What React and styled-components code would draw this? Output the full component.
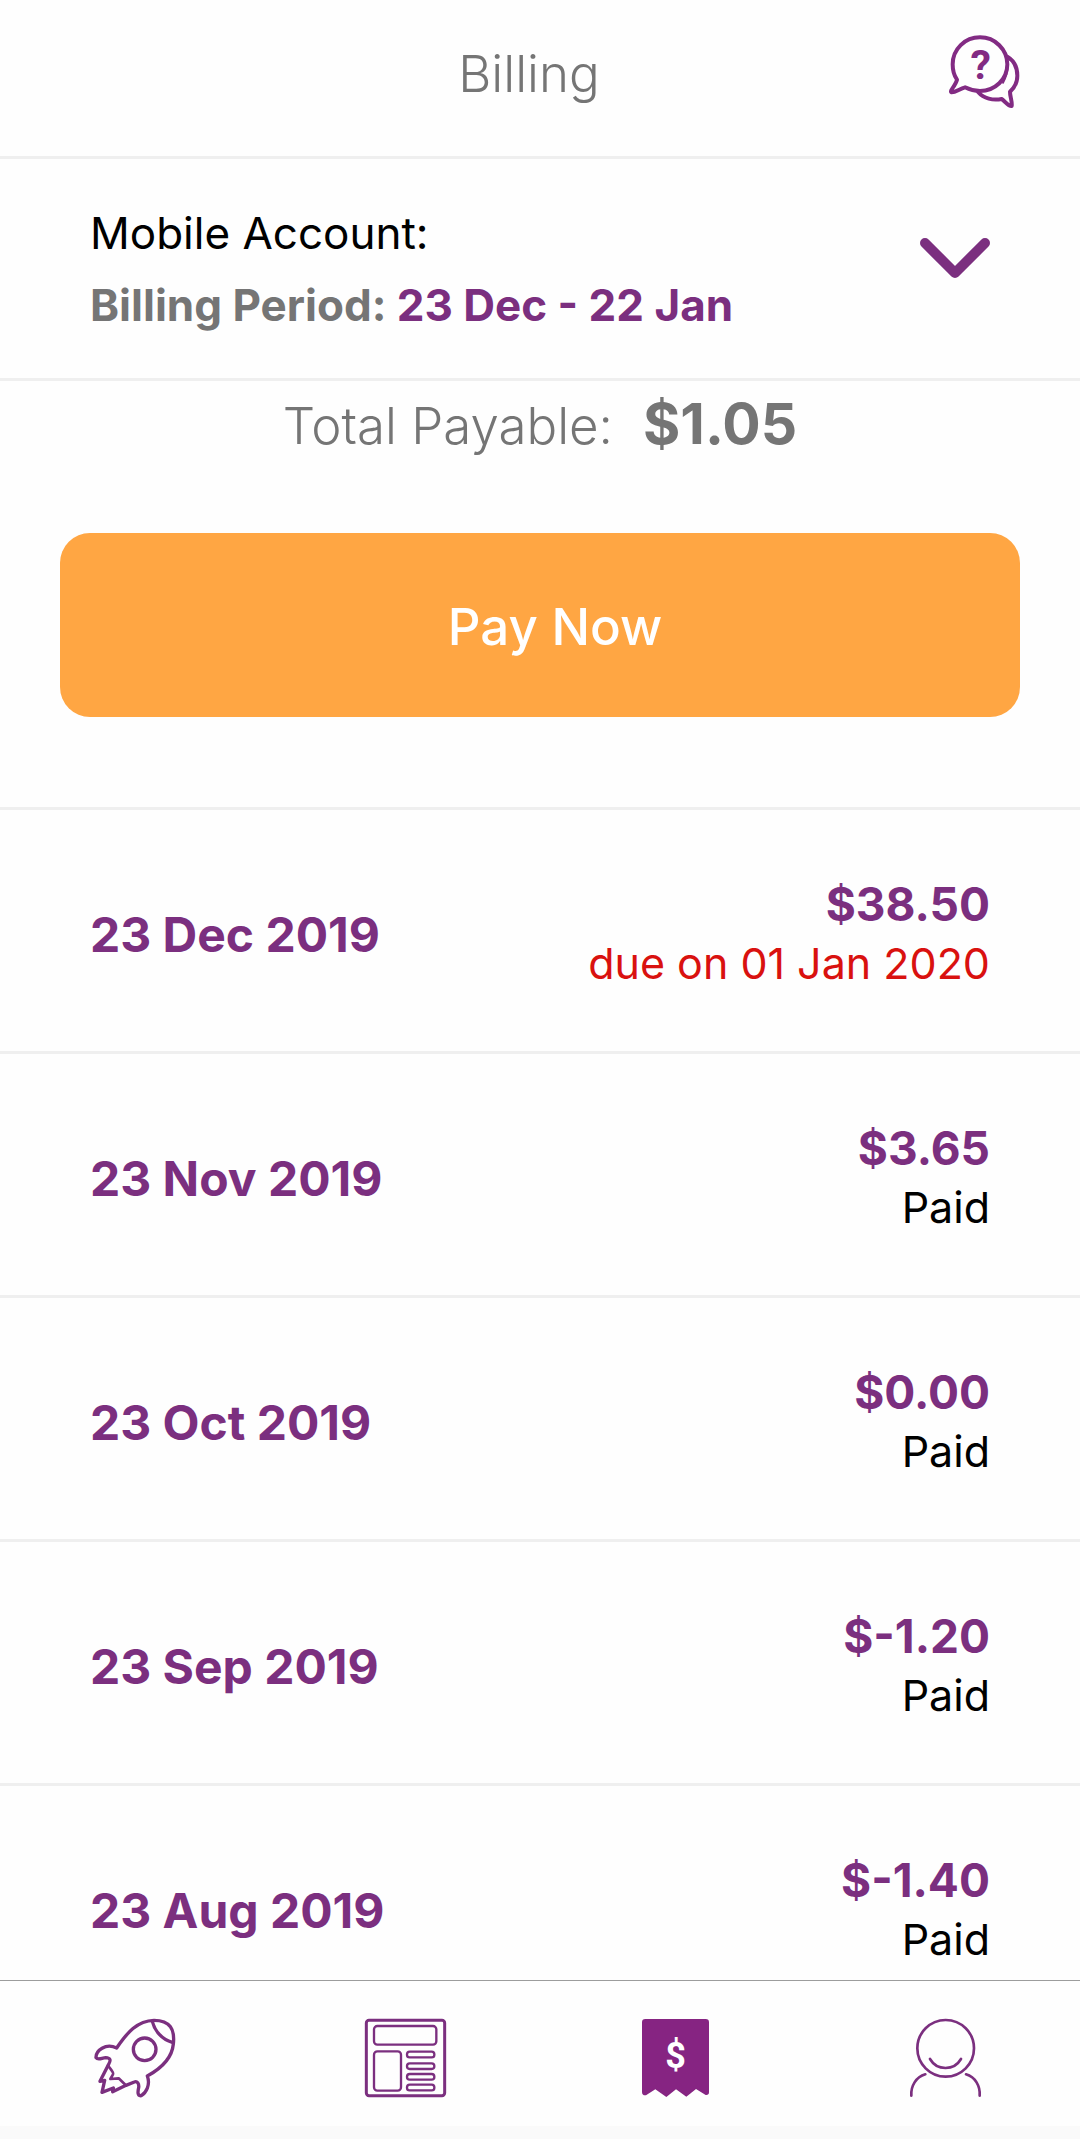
import React from "react";
import styled, { createGlobalStyle } from "styled-components";

const purple = "#7b2f7f";
const grey = "#757575";
const line = "#efefef";

const GlobalStyle = createGlobalStyle`
  * { box-sizing: border-box; }
  body { margin: 0; background: #fefefe; }
  button { font: inherit; color: inherit; border: 0; padding: 0; background: none; cursor: pointer; }
  h1, h2, p, ul { margin: 0; padding: 0; }
`;

const Screen = styled.div`
  display: flex;
  flex-direction: column;
  height: 100vh;
  overflow: hidden;
  background: #fefefe;
  color: #000;
  font-family: Inter, "Liberation Sans", sans-serif;
  font-size: 43px;
  font-weight: 400;
`;

const Header = styled.header`
  display: grid;
  grid-template-columns: 138px 1fr 130px;
  align-items: center;
  flex: none;
  padding: 20px 30px 36px 0;
  border-bottom: 3px solid ${line};
`;

const Title = styled.h1`
  grid-column: 2;
  padding-top: 8px;
  color: ${grey};
  font-size: 51px;
  font-weight: 300;
  line-height: 60px;
  text-align: center;
`;

const IconButton = styled.button`
  display: flex;
  justify-content: center;
`;

const ExpandButton = styled(IconButton)`
  padding-bottom: 22px;
`;

const Icon = styled.svg`
  display: block;
  fill: none;
  stroke: ${(p) => p.$color || purple};
  stroke-linecap: round;
  stroke-linejoin: round;
`;

const Content = styled.main`
  flex: 1;
  min-height: 0;
  overflow-y: auto;
  scrollbar-width: none;
`;

const Account = styled.section`
  display: flex;
  align-items: center;
  justify-content: space-between;
  padding: 38px 90px 37px;
  border-bottom: 3px solid ${line};
`;

const AccountLine = styled.p`
  color: ${(p) => (p.$strong ? grey : "#000")};
  font-size: 44px;
  font-weight: ${(p) => (p.$strong ? 700 : 400)};
  line-height: 72px;
`;

const Period = styled.span`
  color: ${purple};
`;

const Payable = styled.section`
  display: flex;
  flex-direction: column;
  padding: 0 60px 90px;
  border-bottom: 3px solid ${line};
`;

const Total = styled.p`
  display: flex;
  justify-content: center;
  align-items: baseline;
  gap: 30px;
  padding-top: 3px;
  margin-bottom: 67px;
  color: ${grey};
  font-size: 51px;
  font-weight: 300;
  line-height: 80px;
`;

const TotalAmount = styled.strong`
  font-size: 57px;
  font-weight: 700;
`;

const PayButton = styled.button`
  padding: 64px 0 60px 30px;
  border-radius: 30px;
  background: #ffa643;
  color: #fff;
  font-size: 51px;
  font-weight: 500;
  line-height: 60px;
`;

const Bills = styled.ul`
  list-style: none;
`;

const Bill = styled.li`
  display: flex;
  align-items: center;
  justify-content: space-between;
  padding: 65px 90px 58px;
  border-bottom: 3px solid ${line};
`;

const BillDate = styled.h2`
  color: ${purple};
  font-size: 48px;
  font-weight: 700;
  line-height: 59px;
`;

const BillDetail = styled.div`
  text-align: right;
  line-height: 59px;
`;

const Amount = styled.p`
  color: ${purple};
  font-size: 46px;
  font-weight: 700;
`;

const Status = styled.p`
  color: ${(p) => (p.$due ? "#d9110f" : "#000")};
`;

const TabBar = styled.nav`
  display: grid;
  grid-template-columns: repeat(4, 1fr);
  flex: none;
  padding: 19px 0 16px;
  border-top: 1px solid #9c9c9c;
`;

const Tab = styled.a`
  display: flex;
  justify-content: center;
`;

const BottomInset = styled.div`
  flex: none;
  height: 13px;
  background: #fafafa;
`;

const IconText = styled.text`
  font-family: Roboto, sans-serif;
  font-weight: 700;
  stroke: none;
  text-anchor: middle;
`;

const HelpIcon = () => (
  <Icon width="130" height="100" viewBox="0 0 390 300" $color="#822b83" strokeWidth="12" aria-hidden="true">
    <path d="M135 202C119 206 108 217 95 217C90 215 96 207 98 204C104 195 109 187 111 179C100 164 98 149 98 133C98 87 135 52 180 52C225 52 262 88 262 133C262 178 225 213 180 213C163 213 149 209 135 202Z" />
    <path d="M262 110C281 121 292 143 292 167C292 187 283 203 270 215C270 231 277 244 275 258C263 259 257 245 245 237C219 242 191 236 175 217" />
    <path d="M262 139C262 156 258 173 249 188" strokeWidth="6" />
    <IconText x="182" y="177" fontSize="123" fill="#822b83">?</IconText>
  </Icon>
);

const ChevronIcon = () => (
  <Icon width="70" height="42" viewBox="0 0 70 42" strokeWidth="10" aria-hidden="true">
    <path d="M5 6L35 36L65 6" />
  </Icon>
);

const RocketIcon = () => (
  <Icon width="110" height="110" viewBox="0 0 330 330" strokeWidth="10" aria-hidden="true">
    <path d="M110 144C141 98 172 62 222 61C271 61 285 89 280 132C276 177 244 205 202 228C212 255 198 278 184 287C172 289 173 276 176 263C178 251 171 242 163 246L138 256L98 275L100 264L66 277L74 241L60 244L86 193C93 180 92 174 77 173C67 173 54 182 48 173C47 152 77 128 110 144Z" />
    <path d="M217 64C224 93 246 119 277 127" />
    <circle cx="194" cy="148" r="34" />
    <path d="M84 196C91 208 102 216 99 223L91 237L116 235L136 254" strokeWidth="8" />
  </Icon>
);

const NewsIcon = () => (
  <Icon width="110" height="110" viewBox="0 0 330 330" strokeWidth="7" aria-hidden="true">
    <rect x="49" y="61" width="235" height="226" rx="8" strokeWidth="9" />
    <rect x="72" y="78" width="187" height="56" rx="10" />
    <rect x="72" y="154" width="81" height="118" rx="10" />
    <rect x="171" y="155" width="82" height="17" rx="8" />
    <rect x="171" y="190" width="82" height="17" rx="8" />
    <rect x="171" y="222" width="82" height="17" rx="8" />
    <rect x="171" y="254" width="82" height="17" rx="8" />
  </Icon>
);

const BillIcon = () => (
  <Icon width="110" height="110" viewBox="0 0 330 330" aria-hidden="true">
    <path
      d="M76 57H257Q267 57 267 67V277Q267 286 257 285L228 267L199 290L168 268L139 291L106 268L78 286Q66 287 66 276V67Q66 57 76 57Z"
      fill="#862482"
      stroke="none"
    />
    <IconText x="167" y="203" fontSize="108" fill="#fff">$</IconText>
  </Icon>
);

const ProfileIcon = () => (
  <Icon width="110" height="110" viewBox="0 0 330 330" strokeWidth="8" aria-hidden="true">
    <circle cx="167" cy="145" r="85" />
    <path d="M120 177C141 213 192 213 213 177" />
    <path d="M106 223C78 231 62 258 64 287" />
    <path d="M228 223C256 231 271 258 269 287" />
  </Icon>
);

const bills = [
  { date: "23 Dec 2019", amount: "$38.50", status: "due on 01 Jan 2020", due: true },
  { date: "23 Nov 2019", amount: "$3.65", status: "Paid" },
  { date: "23 Oct 2019", amount: "$0.00", status: "Paid" },
  { date: "23 Sep 2019", amount: "$-1.20", status: "Paid" },
  { date: "23 Aug 2019", amount: "$-1.40", status: "Paid" },
];

const tabs = [
  { label: "Home", icon: <RocketIcon /> },
  { label: "News", icon: <NewsIcon /> },
  { label: "Billing", icon: <BillIcon />, current: true },
  { label: "Profile", icon: <ProfileIcon /> },
];

export default function App() {
  return (
    <Screen>
      <GlobalStyle />
      <Header>
        <Title>Billing</Title>
        <IconButton type="button" aria-label="Help">
          <HelpIcon />
        </IconButton>
      </Header>
      <Content>
        <Account>
          <div>
            <AccountLine>Mobile Account:</AccountLine>
            <AccountLine $strong>
              Billing Period: <Period>23 Dec - 22 Jan</Period>
            </AccountLine>
          </div>
          <ExpandButton type="button" aria-label="Choose account">
            <ChevronIcon />
          </ExpandButton>
        </Account>
        <Payable>
          <Total>
            <span>Total Payable:</span>
            <TotalAmount>$1.05</TotalAmount>
          </Total>
          <PayButton type="button">Pay Now</PayButton>
        </Payable>
        <Bills>
          {bills.map((bill) => (
            <Bill key={bill.date}>
              <BillDate>{bill.date}</BillDate>
              <BillDetail>
                <Amount>{bill.amount}</Amount>
                <Status $due={bill.due}>{bill.status}</Status>
              </BillDetail>
            </Bill>
          ))}
        </Bills>
      </Content>
      <TabBar aria-label="Main">
        {tabs.map((tab) => (
          <Tab
            key={tab.label}
            href={`#${tab.label.toLowerCase()}`}
            aria-label={tab.label}
            aria-current={tab.current ? "page" : undefined}
          >
            {tab.icon}
          </Tab>
        ))}
      </TabBar>
      <BottomInset />
    </Screen>
  );
}
